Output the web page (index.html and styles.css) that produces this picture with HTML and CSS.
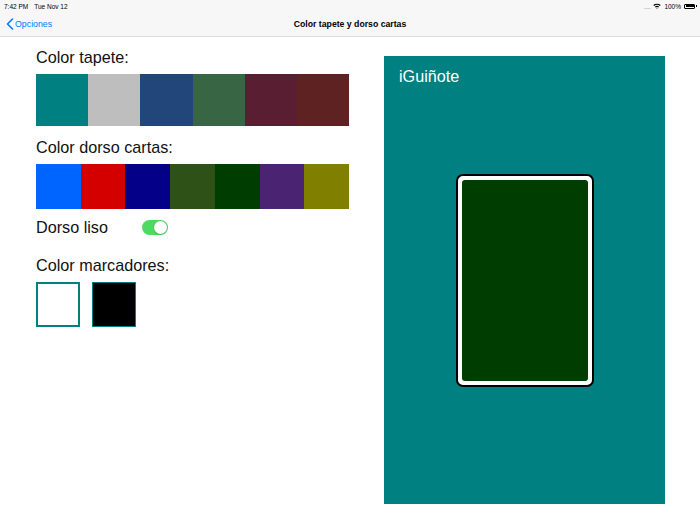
FILE: index.html
```html
<!DOCTYPE html>
<html>
<head>
<meta charset="utf-8">
<link rel="stylesheet" href="styles.css">
</head>
<body>
<header class="top">
  <div class="status">
    <span class="time">7:42 PM</span><span class="date">Tue Nov 12</span>
    <span class="status-right">
      <span class="dots">.....</span>
      <svg class="wifi" width="8" height="6" viewBox="0 0 8 6"><path d="M0.3 2.1 A5.4 5.4 0 0 1 7.7 2.1 L6.8 3 A4.1 4.1 0 0 0 1.2 3 Z M1.9 3.7 A3 3 0 0 1 6.1 3.7 L5.2 4.6 A1.8 1.8 0 0 0 2.8 4.6 Z M3.4 5.2 A0.9 0.9 0 0 1 4.6 5.2 L4 5.9 Z" fill="#000"/></svg>
      <span class="pct">100%</span>
      <span class="battery"><span class="battery-fill"></span></span><span class="battery-tip"></span>
    </span>
  </div>
  <nav class="nav">
    <a class="back">
      <svg width="8" height="12" viewBox="0 0 8 12"><path d="M6.5 1 L1.5 6 L6.5 11" fill="none" stroke="#007aff" stroke-width="1.6" stroke-linecap="round" stroke-linejoin="round"/></svg>
      <span>Opciones</span>
    </a>
    <div class="title">Color tapete y dorso cartas</div>
  </nav>
</header>
<main class="main">
  <section class="settings">
    <h2 class="label l1">Color tapete:</h2>
    <div class="swatches tapete">
      <span style="background:#008080"></span>
      <span style="background:#bebebe"></span>
      <span style="background:#22457a"></span>
      <span style="background:#386644"></span>
      <span style="background:#5a1e33"></span>
      <span style="background:#5e2222"></span>
    </div>
    <h2 class="label l2">Color dorso cartas:</h2>
    <div class="swatches dorso">
      <span style="background:#0064ff"></span>
      <span style="background:#d40000"></span>
      <span style="background:#050088"></span>
      <span style="background:#2e5118"></span>
      <span style="background:#003d00"></span>
      <span style="background:#4b2373"></span>
      <span style="background:#807f00"></span>
    </div>
    <div class="row">
      <span class="label row-label">Dorso liso</span>
      <span class="toggle"><span class="knob"></span></span>
    </div>
    <h2 class="label l3">Color marcadores:</h2>
    <div class="markers">
      <span class="marker white"></span>
      <span class="marker black"></span>
    </div>
  </section>
  <section class="preview">
    <div class="brand">iGuiñote</div>
    <div class="card"><div class="card-back"></div></div>
  </section>
</main>
</body>
</html>
```
FILE: styles.css
```css
* { box-sizing: border-box; }
html, body { margin: 0; padding: 0; }
body {
  width: 700px;
  height: 525px;
  background: #fff;
  font-family: "Liberation Sans", Arial, sans-serif;
  color: #000;
  overflow: hidden;
}
.top {
  background: #f7f7f7;
  border-bottom: 1px solid #dcdcdc;
  height: 37px;
}
.status {
  height: 12px;
  display: flex;
  align-items: center;
  font-size: 6.5px;
  padding: 0 3px 0 4px;
}
.date { margin-left: 6px; }
.status-right {
  margin-left: auto;
  display: flex;
  align-items: center;
  gap: 3px;
}
.dots { color: #999; letter-spacing: -0.5px; }
.battery {
  width: 11px;
  height: 5px;
  border: 0.7px solid #000;
  border-radius: 1px;
  padding: 0.5px;
  display: flex;
}
.battery-fill { flex: 1; background: #000; }
.battery-tip { width: 1px; height: 2px; background: #000; margin-left: -2px; }
.nav {
  height: 24px;
  position: relative;
  display: flex;
  align-items: center;
  padding-left: 6px;
}
.back {
  display: flex;
  align-items: center;
  gap: 1px;
  color: #007aff;
  font-size: 8.8px;
}
.title {
  position: absolute;
  left: 0;
  right: 0;
  text-align: center;
  font-size: 8.7px;
  font-weight: bold;
  pointer-events: none;
}
.main {
  display: flex;
  gap: 35px;
  padding-left: 36px;
}
.settings {
  width: 313px;
  display: flex;
  flex-direction: column;
}
.label {
  font-size: 16.2px;
  font-weight: normal;
  line-height: 20px;
  margin: 0;
  color: #111;
}
.l1 { margin-top: 10px; }
.l2 { margin-top: 11px; }
.l3 { margin-top: 18px; }
.swatches {
  display: flex;
  margin-top: 7px;
}
.swatches span { flex: 1; }
.tapete { height: 52px; }
.dorso { height: 45px; margin-top: 7px; }
.row {
  display: flex;
  align-items: center;
  margin-top: 8px;
  height: 20px;
}
.row-label { width: 106px; }
.toggle {
  width: 26px;
  height: 15px;
  border-radius: 8px;
  background: #4cd964;
  position: relative;
}
.knob {
  position: absolute;
  right: 1px;
  top: 1px;
  width: 13px;
  height: 13px;
  border-radius: 50%;
  background: #fff;
  box-shadow: 0 0.5px 1.5px rgba(0,0,0,0.3);
}
.markers {
  display: flex;
  gap: 12px;
  margin-top: 7px;
}
.marker {
  width: 44px;
  height: 45px;
  border: 2px solid #008080;
}
.marker.white { background: #fff; }
.marker.black { background: #000; border-width: 1.5px; }
.preview {
  margin-top: 19px;
  width: 281px;
  height: 448px;
  background: #008080;
  position: relative;
  display: flex;
  align-items: center;
  justify-content: center;
}
.brand {
  position: absolute;
  left: 15px;
  top: 10px;
  color: #fff;
  font-size: 16.2px;
  line-height: 20px;
}
.card {
  width: 138px;
  height: 213px;
  background: #fff;
  border: 2px solid #000;
  border-radius: 7px;
  padding: 4px;
}
.card-back {
  width: 100%;
  height: 100%;
  background: #003d00;
  border-radius: 3px;
}
```
